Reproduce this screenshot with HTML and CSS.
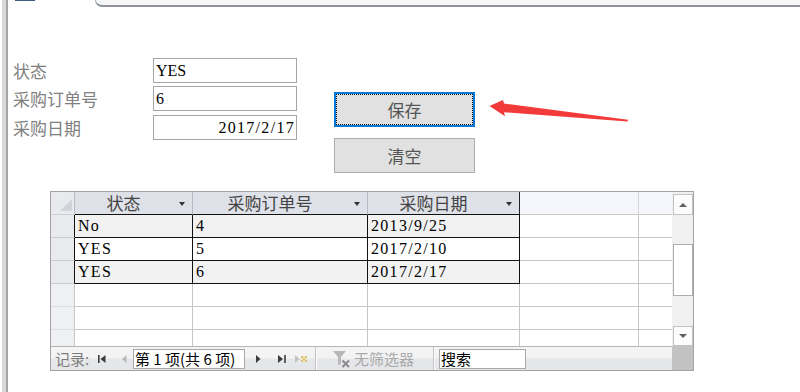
FILE: index.html
```html
<!DOCTYPE html>
<html lang="zh-CN">
<head>
<meta charset="utf-8">
<title>采购表单</title>
<link rel="stylesheet" href="styles.css">
</head>
<body>
<div class="app">
  <div class="leftbar"></div>
  <div class="main">
    <div class="tabstrip">
      <div class="tabicon"></div>
      <div class="tabcurve"></div>
    </div>
    <div class="form">
      <div class="top-row">
        <div class="fields">
          <div class="field"><span class="label">状态</span><div class="box">YES</div></div>
          <div class="field"><span class="label">采购订单号</span><div class="box">6</div></div>
          <div class="field"><span class="label">采购日期</span><div class="box num">2017/2/17</div></div>
        </div>
        <div class="buttons">
          <div class="btn focused">保存</div>
          <div class="btn">清空</div>
        </div>
      </div>

      <div class="ds">
        <div class="sheet">
          <div class="grid">
            <div class="c sel hd"><svg class="corner-tri" width="12" height="12" viewBox="0 0 12 12"><polygon points="0,12 12,0 12,12" fill="#cfd3da"/></svg></div>
            <div class="c h"><span class="ht">状态</span><span class="dd"><i></i></span></div>
            <div class="c h"><span class="ht">采购订单号</span><span class="dd"><i></i></span></div>
            <div class="c h h3"><span class="ht">采购日期</span><span class="dd"><i></i></span></div>
            <div class="c h blank"></div>
            <div class="c h blank nr"></div>

            <div class="c sel dr"></div>
            <div class="c d alt">No</div>
            <div class="c d alt">4</div>
            <div class="c d alt">2013/9/25</div>
            <div class="c e"></div>
            <div class="c e nr"></div>

            <div class="c sel dr"></div>
            <div class="c d">YES</div>
            <div class="c d">5</div>
            <div class="c d">2017/2/10</div>
            <div class="c e"></div>
            <div class="c e nr"></div>

            <div class="c sel dr"></div>
            <div class="c d alt">YES</div>
            <div class="c d alt">6</div>
            <div class="c d alt">2017/2/17</div>
            <div class="c e"></div>
            <div class="c e nr"></div>

            <div class="c sel er"></div>
            <div class="c e"></div>
            <div class="c e"></div>
            <div class="c e"></div>
            <div class="c e"></div>
            <div class="c e nr"></div>

            <div class="c sel er"></div>
            <div class="c e"></div>
            <div class="c e"></div>
            <div class="c e"></div>
            <div class="c e"></div>
            <div class="c e nr"></div>

            <div class="c sel er lastrow"></div>
            <div class="c e lastrow"></div>
            <div class="c e lastrow"></div>
            <div class="c e lastrow"></div>
            <div class="c e lastrow"></div>
            <div class="c e nr lastrow"></div>
          </div>
        </div>

        <div class="vscroll">
          <div class="sb-btn up"><i></i></div>
          <div class="sb-track top"></div>
          <div class="sb-thumb"></div>
          <div class="sb-track fill"></div>
          <div class="sb-btn down"><i></i></div>
        </div>

        <div class="navbar">
          <span class="rec">记录:</span>
          <span class="nb first"><svg width="8" height="8" viewBox="0 0 8 8"><rect x="0" y="0" width="1.6" height="8" fill="#3c3c3c"/><polygon points="7.5,0 7.5,8 2.5,4" fill="#3c3c3c"/></svg></span>
          <span class="nb prev"><svg width="5" height="8" viewBox="0 0 5 8"><polygon points="4.5,0 4.5,8 0,4" fill="#b9b9b9"/></svg></span>
          <span class="navbox">第 1 项(共 6 项)</span>
          <span class="nb next"><svg width="5" height="8" viewBox="0 0 5 8"><polygon points="0,0 0,8 4.5,4" fill="#3c3c3c"/></svg></span>
          <span class="nb last"><svg width="8" height="8" viewBox="0 0 8 8"><polygon points="0,0 0,8 5,4" fill="#3c3c3c"/><rect x="6.2" y="0" width="1.6" height="8" fill="#3c3c3c"/></svg></span>
          <span class="nb new"><svg width="13" height="8" viewBox="0 0 13 8"><polygon points="0,0 0,8 4.5,4" fill="#c2c2c2"/><rect x="6" y="1" width="6" height="6" fill="#f1e6b8"/><rect x="6" y="1" width="2" height="2" fill="#d9c276"/><rect x="10" y="1" width="2" height="2" fill="#d9c276"/><rect x="8" y="3" width="2" height="2" fill="#d9c276"/><rect x="6" y="5" width="2" height="2" fill="#d9c276"/><rect x="10" y="5" width="2" height="2" fill="#d9c276"/></svg></span>
          <span class="sep"></span>
          <span class="filter"><svg width="18" height="18" viewBox="0 0 18 18"><polygon points="0,1 13,1 8,7 8,14 5,15 5,7" fill="#b8b8b8"/><path d="M9.5 10.5 L16 17 M16 10.5 L9.5 17" stroke="#8a8a8a" stroke-width="2"/></svg></span>
          <span class="nofilter">无筛选器</span>
          <span class="sep sep2"></span>
          <span class="search">搜索</span>
        </div>
        <div class="corner"></div>
      </div>
    </div>
  </div>
  <svg class="annot-arrow" width="150" height="32" viewBox="485 95 150 32"><polygon points="489.5,106 503,100 504,103.6 628,119.8 627.5,121.6 504,112.2 505,116.2" fill="#f23a3a"/></svg>
</div>
</body>
</html>
```

FILE: styles.css
```css
html, body {
  margin: 0;
  padding: 0;
  background: #ffffff;
}
body {
  font-family: "Noto Sans CJK SC", "Noto Sans", sans-serif;
  color: #000;
}
.app {
  position: relative;
  display: flex;
  width: 800px;
  height: 392px;
  overflow: hidden;
}
.leftbar {
  margin-left: 2px;
  width: 4px;
  background: #d9d9d9;
  border-right: 2px solid #a6a6a6;
}
.main {
  flex: 1;
  display: flex;
  flex-direction: column;
}
.tabstrip {
  height: 8px;
  display: flex;
  align-items: flex-start;
}
.tabicon {
  margin-left: 7px;
  width: 20px;
  height: 1px;
  background: #3e5a80;
}
.tabcurve {
  margin-left: 60px;
  flex: 1;
  height: 5px;
  background: #f7f7f7;
  border-left: 1px solid #a2a7ac;
  border-bottom: 2px solid #8c9297;
  border-bottom-left-radius: 7px;
}
.form {
  padding-left: 5px;
}
.top-row {
  display: flex;
  align-items: flex-start;
  margin-top: 50px;
}
.fields {
  display: flex;
  flex-direction: column;
}
.field {
  display: flex;
  align-items: center;
  height: 25px;
}
.field + .field {
  margin-top: 3px;
}
.field:nth-child(3) {
  margin-top: 4px;
}
.label {
  width: 140px;
  font-size: 17px;
  line-height: 25px;
  color: #808080;
}
.box {
  box-sizing: border-box;
  width: 144px;
  height: 25px;
  border: 1px solid #a5a5a5;
  padding: 0 2px;
  font-family: "Liberation Serif", "Noto Sans CJK SC", serif;
  font-size: 16px;
  line-height: 24px;
  color: #000;
}
.box.num {
  text-align: right;
  padding-right: 1px;
  letter-spacing: 1.3px;
}
.buttons {
  display: flex;
  flex-direction: column;
  margin-left: 37px;
  margin-top: 34px;
}
.btn {
  position: relative;
  box-sizing: border-box;
  width: 141px;
  height: 35px;
  border: 1px solid #adadad;
  background: #e1e1e1;
  display: flex;
  align-items: center;
  justify-content: center;
  font-size: 17px;
  color: #555555;
}
.btn + .btn {
  margin-top: 11px;
}
.btn.focused {
  border: 2px solid #0a78d4;
}
.btn.focused::after {
  content: "";
  position: absolute;
  inset: 0;
  border: 1px dotted #111;
}

/* datasheet */
.ds {
  box-sizing: border-box;
  margin-top: 18px;
  margin-left: 37px;
  width: 644px;
  height: 180px;
  border: 1px solid #a3a3a3;
  display: grid;
  grid-template-columns: 621px 21px;
  grid-template-rows: 154px 24px;
}
.grid {
  display: grid;
  grid-template-columns: 24px 118px 175px 152px 119px 33px;
  grid-template-rows: repeat(6, 23px) 16px;
}
.c {
  box-sizing: border-box;
  border-right: 1px solid #c6c6c6;
  border-bottom: 1px solid #c6c6c6;
  background: #ffffff;
}
.c.nr {
  border-right: none;
}
.c.lastrow {
  border-bottom: none;
}
.sel {
  background: #e9eaee;
}
.sel.hd {
  border-right-color: #b9bdc5;
  border-bottom-color: #cfd1d6;
  display: flex;
  align-items: flex-end;
  justify-content: flex-end;
  padding: 0 2px 3px 0;
}
.corner-tri {
  display: block;
}
.sel.dr {
  border-right-color: #111;
  border-bottom-color: #c9cacd;
}
.sel.er {
  border-right-color: #c6c6c6;
  border-bottom-color: #dcdde0;
  background: #eef0f3;
}
.h {
  background: #dee1e7;
  border-right-color: #b6bbc4;
  border-bottom-color: #111;
  display: flex;
  align-items: center;
  font-size: 17px;
  color: #444444;
}
.h.h3 {
  border-right-color: #222;
}
.h.blank {
  background: #f5f6fc;
  border-right-color: #d4d6dc;
  border-bottom-color: #c9c9c9;
}
.ht {
  flex: 1;
  text-align: center;
  line-height: 22px;
}
.dd {
  width: 20px;
  display: flex;
  justify-content: center;
  align-items: center;
}
.dd i {
  display: block;
  width: 0;
  height: 0;
  border-left: 3.5px solid transparent;
  border-right: 3.5px solid transparent;
  border-top: 4px solid #333;
  margin-top: 2px;
}
.d {
  border-right-color: #111;
  border-bottom-color: #111;
  padding-left: 3px;
  font-family: "Liberation Serif", "Noto Sans CJK SC", serif;
  font-size: 16px;
  line-height: 22px;
  letter-spacing: 1.3px;
  color: #000;
}
.d.alt {
  background: #f2f2f2;
}

/* vertical scrollbar */
.vscroll {
  grid-column: 2;
  grid-row: 1;
  background: #f0f0f0;
  display: flex;
  flex-direction: column;
}
.sb-btn {
  box-sizing: border-box;
  width: 20px;
  margin-left: 1px;
  border: 1px solid #c2c2c2;
  background: #fcfcfc;
  display: flex;
  align-items: center;
  justify-content: center;
}
.sb-btn.up {
  height: 21px;
  margin-top: 2px;
}
.sb-btn.down {
  height: 20px;
}
.sb-btn i {
  display: block;
  width: 0;
  height: 0;
  border-left: 4px solid transparent;
  border-right: 4px solid transparent;
}
.sb-btn.up i {
  border-bottom: 4px solid #606060;
}
.sb-btn.down i {
  border-top: 4px solid #606060;
}
.sb-track.top {
  height: 29px;
}
.sb-thumb {
  box-sizing: border-box;
  height: 52px;
  width: 20px;
  margin-left: 1px;
  border: 1px solid #adadad;
  background: #ffffff;
}
.sb-track.fill {
  flex: 1;
}

/* navigation bar */
.navbar {
  grid-column: 1;
  grid-row: 2;
  border-top: 1px solid #b5b5b5;
  display: flex;
  align-items: center;
  background: linear-gradient(#f4f4f4 0%, #f3f3f3 48%, #e6e7ea 52%, #e5e6e9 100%);
  font-size: 15px;
}
.rec {
  margin-left: 4px;
  width: 41px;
  color: #7c7c7c;
  line-height: 22px;
}
.nb {
  display: flex;
  align-items: center;
  justify-content: center;
  height: 22px;
}
.nb svg {
  display: block;
}
.nb.first {
  width: 12px;
}
.nb.prev {
  width: 16px;
  margin-left: 8px;
}
.navbox {
  box-sizing: border-box;
  margin-left: 1px;
  width: 112px;
  height: 20px;
  border: 1px solid #a9a9a9;
  background: #ffffff;
  padding-left: 1px;
  line-height: 18px;
  color: #000;
  white-space: nowrap;
}
.nb.next {
  width: 27px;
}
.nb.last {
  width: 20px;
}
.nb.new {
  width: 18px;
}
.sep {
  align-self: stretch;
  width: 1px;
  margin-left: 5px;
  background: #c4c4c4;
  border-right: 1px solid #fafafa;
}
.filter {
  margin-left: 16px;
  height: 18px;
}
.filter svg {
  display: block;
}
.nofilter {
  margin-left: 3px;
  color: #a9a9a9;
  line-height: 22px;
}
.sep.sep2 {
  margin-left: 19px;
}
.search {
  box-sizing: border-box;
  margin-left: 4px;
  width: 87px;
  height: 20px;
  border: 1px solid #a9a9a9;
  background: #ffffff;
  padding-left: 1px;
  line-height: 18px;
  color: #000;
}
.corner {
  grid-column: 2;
  grid-row: 2;
  background: #c2c2c2;
}

/* annotation arrow drawn over the form */
.annot-arrow {
  position: absolute;
  left: 485px;
  top: 95px;
}
```
